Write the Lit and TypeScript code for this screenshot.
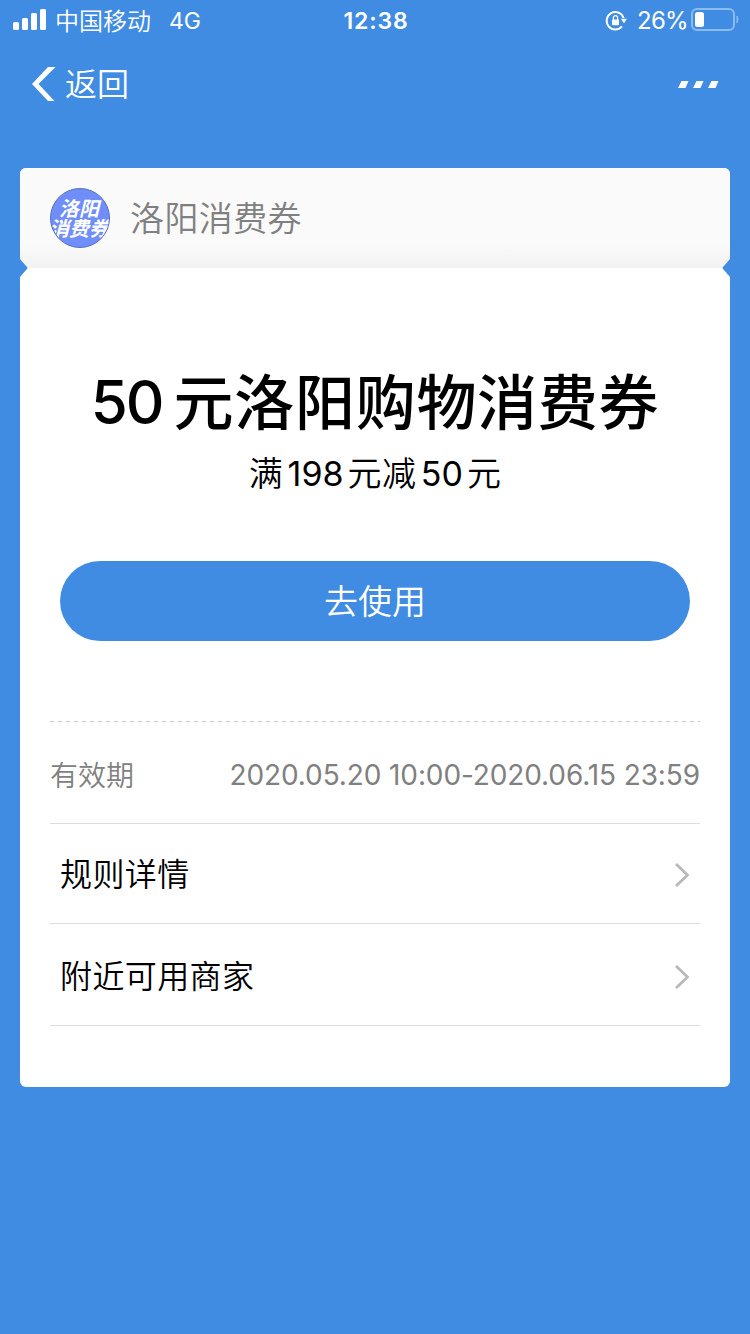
import { LitElement, html, css } from "lit";
import { customElement, property } from "lit/decorators.js";

@customElement("status-bar")
class StatusBar extends LitElement {
  static styles = css`
    :host { display: flex; height: 40px; color: #fff; font-size: 24px; line-height: 42px; white-space: nowrap; }
    svg { display: block; flex: none; }
    .side { flex: 1; display: flex; }
    .left { padding-left: 13px; }
    .right { justify-content: flex-end; padding-right: 11px; }
    .carrier { margin-left: 8px; line-height: 43px; font-weight: 350; }
    .network { margin-left: 18px; font-size: 23px; }
    .time { font-weight: 600; font-size: 23px; letter-spacing: 0.9px; }
    .percent { margin: 0 3px 0 10px; font-size: 24px; letter-spacing: -0.7px; }
  `;
  render() {
    return html`
      <div class="side left">
        <svg width="34" height="40" fill="#fff">
          <rect x="0" y="22" width="6" height="8" rx="1.5" />
          <rect x="9" y="18" width="6" height="12" rx="1.5" />
          <rect x="18" y="13" width="6" height="17" rx="1.5" />
          <rect x="27" y="9" width="6" height="21" rx="1.5" />
        </svg>
        <span class="carrier">中国移动</span>
        <span class="network">4G</span>
      </div>
      <span class="time">12:38</span>
      <div class="side right">
        <svg width="22" height="40" fill="none" stroke="#fff">
          <path d="M17 26.4A8.7 8.7 0 1 1 18.600 18" stroke-width="1.9" />
          <path d="M15.800 18.700H22L19 23.200Z" fill="#fff" stroke="none" />
          <rect x="7" y="19.500" width="7" height="5.700" rx=".8" fill="#fff" stroke="none" />
          <path d="M8.400 20v-2.200a2.100 2.100 0 0 1 4.200 0v2.200" stroke-width="1.2" />
        </svg>
        <span class="percent">26%</span>
        <svg width="48" height="40">
          <rect x="1" y="9" width="42" height="21" rx="5" fill="none" stroke="#8cbbed" stroke-width="2" />
          <rect x="4" y="12" width="9" height="15" rx="2.5" fill="#fff" />
          <path d="M46 16q2 3.500 0 7z" fill="#8cbbed" stroke="#8cbbed" />
        </svg>
      </div>
    `;
  }
}

@customElement("nav-bar")
class NavBar extends LitElement {
  static styles = css`
    :host { display: flex; height: 88px; justify-content: space-between; align-items: center; padding: 0 31px 0 32px; box-sizing: border-box; color: #fff; }
    svg { display: block; }
    .back { display: flex; align-items: center; gap: 9px; font-size: 32px; line-height: 48px; font-weight: 350; }
    .back span { padding-top: 1px; }
  `;
  render() {
    return html`
      <div class="back">
        <svg width="24" height="34"><path d="M16 0h7.500L6.500 17l16 17H16L0 17z" fill="#fff" /></svg>
        <span>返回</span>
      </div>
      <svg width="41" height="7" fill="#fff">
        <path d="M3.500 0h7l-3 7h-7.500zM18.500 0h7l-3 7h-7.500zM33.500 0h7l-3 7h-7.500z" />
      </svg>
    `;
  }
}

@customElement("link-row")
class LinkRow extends LitElement {
  @property() label = "";
  static styles = css`
    :host { display: flex; justify-content: space-between; align-items: center; box-sizing: border-box; padding: 0 10px; border-bottom: 1px solid #ddd; font-size: 32px; font-weight: 350; letter-spacing: 0.4px; color: #000; }
    span { padding-bottom: 3px; }
    svg { display: block; margin-top: 3px; }
  `;
  render() {
    return html`
      <span>${this.label}</span>
      <svg width="15" height="24" fill="none" stroke="#b9b9b9" stroke-width="2.8"><path d="M1 1l11.500 11L1 23" /></svg>
    `;
  }
}

@customElement("app-root")
class AppRoot extends LitElement {
  static styles = css`
    :host { display: block; width: 750px; height: 1334px; background: #408ce2; overflow: hidden; font-family: Inter, "Noto Sans CJK SC", sans-serif; }
    .card { position: relative; margin: 40px 20px 0; height: 919px; border-radius: 6px; background: #fff; display: flex; flex-direction: column; overflow: hidden; }
    .brand { height: 100px; flex: none; box-sizing: border-box; padding-left: 30px; display: flex; align-items: center; gap: 20px; background: linear-gradient(#fafafa 76%, #f2f2f2); color: #808080; font-size: 34px; font-weight: 350; letter-spacing: 0.4px; }
    .name { padding-bottom: 3px; }
    .logo { width: 60px; height: 60px; box-sizing: border-box; border: 1px solid #5870b8; border-radius: 50%; overflow: hidden; background: #708efa; color: #fff; display: flex; flex-direction: column; align-items: center; justify-content: center; padding: 2px 2px 0 0; font-size: 20px; line-height: 20px; font-weight: 600; font-style: italic; letter-spacing: 0; white-space: nowrap; }
    .notch { position: absolute; top: 91px; width: 8px; height: 18px; fill: #408ce2; }
    .notch.l { left: 0; }
    .notch.r { right: 0; transform: scaleX(-1); }
    .body { padding: 0 30px; display: flex; flex-direction: column; }
    .title { margin-top: 90px; height: 90px; line-height: 90px; font-size: 60px; font-weight: 500; letter-spacing: 0.7px; text-align: center; white-space: nowrap; color: #000; }
    .title .num { letter-spacing: -2px; margin-right: 11px; vertical-align: 1px; line-height: 1; }
    .sub { margin-top: 1px; height: 50px; line-height: 50px; font-size: 34px; font-weight: 350; letter-spacing: 0.4px; text-align: center; white-space: nowrap; color: #000; }
    .sub .num { font-weight: 400; letter-spacing: 0; margin: 0 4px 0 4.500px; }
    .use { margin: 62px 10px 0; height: 80px; border-radius: 40px; background: #408ce2; color: #fff; font-size: 34px; font-weight: 350; line-height: 82px; text-align: center; }
    .dash { margin-top: 80px; height: 1px; background: repeating-linear-gradient(90deg, #ccc 0 4px, transparent 4px 8px); }
    .valid { height: 102px; box-sizing: border-box; border-bottom: 1px solid #ddd; display: flex; justify-content: space-between; align-items: center; font-size: 28px; color: #808080; white-space: nowrap; }
    .valid .term { font-weight: 350; padding-top: 2px; }
    .valid .range { padding-top: 4px; letter-spacing: -0.11px; }
    .rules { height: 100px; }
    .shops { height: 102px; padding-top: 2px; }
  `;
  render() {
    return html`
      <status-bar></status-bar>
      <nav-bar></nav-bar>
      <main class="card">
        <header class="brand">
          <div class="logo"><span>洛阳</span><span>消费券</span></div>
          <span class="name">洛阳消费券</span>
        </header>
        <svg class="notch l" viewBox="0 0 8 18"><path d="M0 0L6.500 7.500Q8.500 9 6.500 10.500L0 18z" /></svg>
        <svg class="notch r" viewBox="0 0 8 18"><path d="M0 0L6.500 7.500Q8.500 9 6.500 10.500L0 18z" /></svg>
        <div class="body">
          <div class="title"><span class="num">50</span>元洛阳购物消费券</div>
          <div class="sub">满<span class="num">198</span>元减<span class="num">50</span>元</div>
          <div class="use">去使用</div>
          <div class="dash"></div>
          <div class="valid">
            <span class="term">有效期</span>
            <span class="range">2020.05.20 10:00-2020.06.15 23:59</span>
          </div>
          <link-row class="rules" label="规则详情"></link-row>
          <link-row class="shops" label="附近可用商家"></link-row>
        </div>
      </main>
    `;
  }
}
